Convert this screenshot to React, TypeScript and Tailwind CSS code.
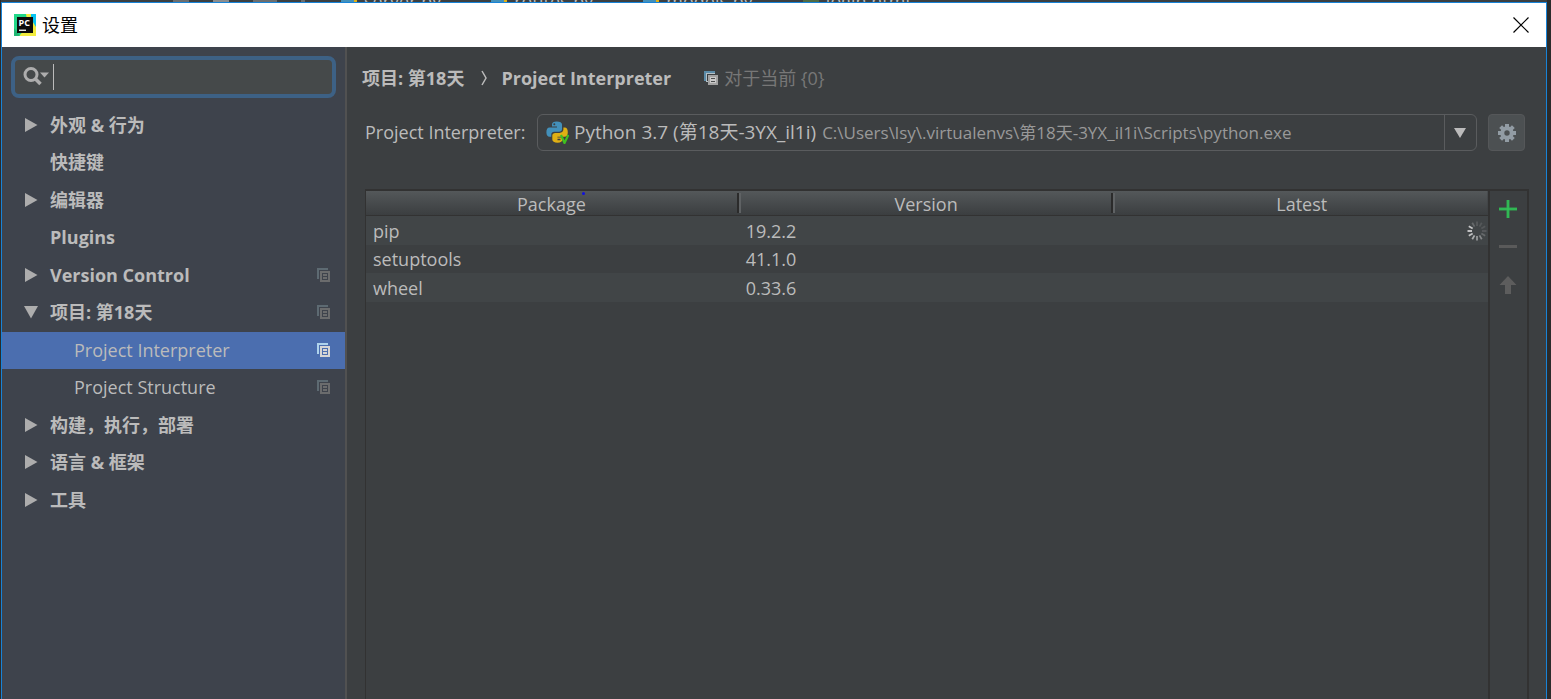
import React from "react";

type TreeItem = {
  label: string;
  state?: "closed" | "open";
  child?: boolean;
  shared?: boolean;
  selected?: boolean;
};

const tree: TreeItem[] = [
  { label: "外观 & 行为", state: "closed" },
  { label: "快捷键" },
  { label: "编辑器", state: "closed" },
  { label: "Plugins" },
  { label: "Version Control", state: "closed", shared: true },
  { label: "项目: 第18天", state: "open", shared: true },
  { label: "Project Interpreter", child: true, shared: true, selected: true },
  { label: "Project Structure", child: true, shared: true },
  { label: "构建，执行，部署", state: "closed" },
  { label: "语言 & 框架", state: "closed" },
  { label: "工具", state: "closed" },
];

const packages = [
  { name: "pip", version: "19.2.2", loading: true },
  { name: "setuptools", version: "41.1.0", loading: false },
  { name: "wheel", version: "0.33.6", loading: false },
];

const columns = ["Package", "Version", "Latest"];

const editorTabs = ["server.py", "routes.py", "models.py", "login.html"];

function AppLogo() {
  return (
    <svg width="22" height="22" viewBox="0 0 22 22" aria-hidden="true">
      <rect width="22" height="22" fill="#21d789" />
      <path d="M12 0H18L22 12V22H5L14 12Z" fill="#f2ec3e" />
      <path d="M17 0H22V13L17 5Z" fill="#07c3f2" />
      <path d="M0 14L6 22H0Z" fill="#21b573" />
      <rect x="3" y="3" width="16" height="16" fill="#0b0b0b" />
      <text x="4.500" y="11.800" fontSize="9" fontWeight="700" fill="#fff">PC</text>
      <rect x="5" y="15.600" width="7" height="1.300" fill="#fff" />
    </svg>
  );
}

function CopyIcon({ back, front }: { back: string; front: string }) {
  return (
    <svg width="13" height="14" viewBox="0 0 13 14" shapeRendering="crispEdges" className="shrink-0" aria-hidden="true">
      <path d="M0 0H11V2H2V11H0Z" fill={back} />
      <path d="M3 3H13V14H3ZM5 5V12H11V5Z" fillRule="evenodd" fill={front} />
      <path d="M6 6H10V8H6ZM6 9H10V11H6Z" fill={front} />
    </svg>
  );
}

function ScopeIcon() {
  return (
    <svg width="14" height="14" viewBox="0 0 14 14" shapeRendering="crispEdges" className="shrink-0" aria-hidden="true">
      <path d="M0 0H11V2H2V10H0Z" fill="#5b8ba8" />
      <path d="M2 2H11V4H4V11H2Z" fill="#b5c0c6" />
      <path d="M3 3H11V4H4V10H3Z" fill="#3c3f41" />
      <rect x="4" y="4" width="10" height="10" fill="#a2a2a2" />
      <path d="M6 6H12V12H6Z" fill="#c9c9c9" />
      <path d="M7 7H11V8H7ZM7 10H11V11H7Z" fill="#4b4d4e" />
    </svg>
  );
}

function SearchIcon() {
  return (
    <svg width="28" height="22" viewBox="0 0 28 22" className="shrink-0" aria-hidden="true">
      <circle cx="9" cy="8.500" r="6" fill="none" stroke="#adadad" strokeWidth="3" />
      <path d="M13 12.500L18.500 18" stroke="#adadad" strokeWidth="3.500" />
      <path d="M18 6.500H27L22.500 11.500Z" fill="#adadad" />
    </svg>
  );
}

function PythonIcon() {
  return (
    <svg width="23" height="23" viewBox="0 0 23 23" className="shrink-0" aria-hidden="true">
      <path
        d="M10.800 0.500C7.500 0.500 6 1.500 6 3.600V5.600H11V6.400H3.600C1.400 6.400 0.400 8.300 0.400 11.200C0.400 14 1.500 15.800 3.600 15.800H5.300V13.500C5.300 11.800 6.600 10.800 8.200 10.800H13C14.800 10.800 16 9.700 16 8V3.600C16 1.500 14 0.500 10.800 0.500Z"
        fill="#4390ba"
      />
      <circle cx="8.300" cy="3.200" r="1" fill="#3c3f41" />
      <path
        d="M17.400 6.400H18.600C20.800 6.400 21.800 8.300 21.800 11.200C21.800 14 20.800 15.800 18.600 15.800H11.400V16.600H16.400V18.600C16.400 20.700 14.800 21.700 11.600 21.700C8.200 21.700 6.300 20.700 6.300 18.600V14.600C6.300 13 7.500 11.900 9.200 11.900H13.600C15.600 11.900 17.400 10.600 17.400 8.600Z"
        fill="#e0b014"
      />
      <path d="M11.500 18.500H14.500" stroke="#3c3f41" strokeWidth="1.500" />
      <path d="M15 14L18.500 22L22.300 14" fill="none" stroke="#3fc01f" strokeWidth="2.200" />
    </svg>
  );
}

function GearIcon() {
  const teeth = [0, 45, 90, 135, 180, 225, 270, 315];
  return (
    <svg width="18" height="18" viewBox="0 0 18 18" aria-hidden="true">
      {teeth.map((a) => (
        <rect key={a} x="7" y="0" width="4" height="5" fill="#929ca4" transform={`rotate(${a} 9 9)`} />
      ))}
      <circle cx="9" cy="9" r="4.700" fill="none" stroke="#929ca4" strokeWidth="4" />
    </svg>
  );
}

function Spinner() {
  const shades = ["#5a5d5f", "#55585a", "#55585a", "#5a5d5f", "#66696b", "#858789", "#9b9d9e", "#adafb0", "#c0c1c2", "#d8d8d8", "#c4c5c6", "#66696b"];
  return (
    <svg width="20" height="20" viewBox="0 0 20 20" aria-hidden="true">
      {shades.map((c, i) => (
        <path key={i} d="M10 5V0.500" stroke={c} strokeWidth="1.700" transform={`rotate(${i * 30} 10 10)`} />
      ))}
    </svg>
  );
}

function Arrow({ state }: { state?: "closed" | "open" }) {
  return (
    <svg width="14" height="14" viewBox="0 0 14 14" className="shrink-0" aria-hidden="true">
      {state === "closed" && <path d="M1 0L13.500 7L1 14Z" fill="#adadad" />}
      {state === "open" && <path d="M0 1H14L7 13.500Z" fill="#adadad" />}
    </svg>
  );
}

export default function App() {
  return (
    <div className="flex h-screen flex-col overflow-hidden bg-[#2b2b2b] pr-1 pl-px font-['Open_Sans','Noto_Sans_CJK_SC',sans-serif] text-lg text-[#bbbbbb]">
      <div className="flex h-0.5 shrink-0 items-center overflow-hidden bg-[#3c3f41] leading-none" aria-hidden="true">
        <div className="flex w-[340px] shrink-0 gap-6 pl-[172px]">
          <span className="h-0.5 w-4 bg-[#6b6e70]" />
          <span className="h-0.5 w-4 bg-[#8a8d8f]" />
          <span className="h-0.5 w-6 bg-[#6b6e70]" />
          <span className="h-0.5 w-1 bg-[#6b6e70]" />
        </div>
        <div className="flex items-center gap-[50px]">
          {editorTabs.map((t) => (
            <span key={t} className="flex items-center gap-[7px]">
              <span className={`h-0.5 w-4 border-r-3 ${t.endsWith(".py") ? "border-[#e0b014] bg-[#4390ba]" : "border-[#4f6b45] bg-[#4f6b45]"}`} />
              {t}
            </span>
          ))}
        </div>
      </div>
      <div className="flex min-h-0 flex-1 flex-col border border-b-0 border-[#1883d7] bg-[#3c3f41]">
        <header className="flex h-11 shrink-0 items-center bg-white pr-4 pb-px pl-3 text-black">
          <AppLogo />
          <h1 className="ml-[6px] flex-1 leading-6">设置</h1>
          <button aria-label="关闭" className="p-px">
            <svg width="16" height="16" viewBox="0 0 16 16" aria-hidden="true">
              <path d="M0.500 0.500L15.500 15.500M15.500 0.500L0.500 15.500" stroke="#000" strokeWidth="1.200" />
            </svg>
          </button>
        </header>

        <div className="flex min-h-0 flex-1">
          <aside className="w-[345px] shrink-0 border-r-2 border-[#515151] bg-[#3e434c] pt-[9px]">
            <label className="mx-[9px] flex h-[42px] items-center rounded-lg border-4 border-[#3d6185] bg-[#45494a] pl-[7px]">
              <SearchIcon />
              <span className="ml-[3px] h-[26px] w-px bg-[#bbbbbb]" />
              <input aria-label="搜索设置" className="min-w-0 flex-1 bg-transparent px-1 caret-transparent outline-none" />
            </label>
            <ul className="mt-[9px]">
              {tree.map((item) => (
                <li key={item.label} className={`h-[37px] even:h-[38px] ${item.selected ? "bg-[#4b6eaf]" : ""}`}>
                  <a href="#" className="flex h-full items-center pr-[15px] pb-[2px] pl-[22px]">
                    <Arrow state={item.state} />
                    <span className={`flex-1 leading-6 ${item.child ? "pl-9" : "pl-3 font-bold"}`}>{item.label}</span>
                    {item.shared && (
                      <CopyIcon
                        back={item.selected ? "#afd3ec" : "#5d6a72"}
                        front={item.selected ? "#d5d5d5" : "#6b6c6d"}
                      />
                    )}
                  </a>
                </li>
              ))}
            </ul>
          </aside>

          <main className="flex min-w-0 flex-1 flex-col pr-[17px] pl-[18px]">
            <nav className="-ml-[3px] flex h-[67px] shrink-0 items-center pb-[5px] leading-6">
              <a href="#" className="font-bold">项目: 第18天</a>
              <svg width="8" height="16" viewBox="0 0 8 16" className="mr-[13px] ml-4" aria-hidden="true">
                <path d="M2 1L6 8L2 15" fill="none" stroke="#bbbbbb" strokeWidth="1.500" />
              </svg>
              <h2 className="font-bold">Project Interpreter</h2>
              <span className="ml-[33px] flex items-center gap-[6px] text-[#777777]">
                <ScopeIcon />
                对于当前 {"{0}"}
              </span>
            </nav>

            <div className="flex h-[37px] shrink-0 items-center pr-1 leading-6">
              <label htmlFor="interpreter" className="w-[172px] shrink-0 pb-[2px] whitespace-nowrap">Project Interpreter:</label>
              <div className="flex h-full min-w-0 flex-1 items-center rounded-md border border-[#5a5c5e] pl-2">
                <PythonIcon />
                <select id="interpreter" className="ml-[5px] shrink-0 appearance-none bg-transparent pb-[2px] text-[19px] [field-sizing:content]">
                  <option>Python 3.7 (第18天-3YX_il1i)</option>
                </select>
                <span className="ml-[6px] min-w-0 flex-1 truncate text-[17px] text-[#999999]">
                  C:\Users\lsy\.virtualenvs\第18天-3YX_il1i\Scripts\python.exe
                </span>
                <span className="flex h-full w-8 items-center justify-center border-l border-[#5a5c5e] pr-px">
                  <svg width="12" height="10" viewBox="0 0 12 10" aria-hidden="true">
                    <path d="M0 0H12L6 10Z" fill="#bbbbbb" />
                  </svg>
                </span>
              </div>
              <button aria-label="解释器选项" className="ml-[11px] flex size-[37px] shrink-0 items-center justify-center rounded-sm border border-[#555759] bg-[#4c5052]">
                <GearIcon />
              </button>
            </div>

            <div className="mt-[38px] flex min-h-0 flex-1 border-t-2 border-r-2 border-l border-[#323232]">
              <div className="min-w-0 flex-1">
                <table className="w-full table-fixed border-collapse leading-6">
                  <thead>
                    <tr className="bg-linear-to-b from-[#54585a] to-[#3a3d3f]">
                      {columns.map((h, i) => (
                        <th key={h} className="w-[33.4%] p-0 font-normal last:w-auto">
                          <div className="flex h-[25px] items-center border-b border-[#323232]">
                            <span className="flex-1 pt-px">
                              <span className="relative">
                                {h}
                                {i === 0 && <span className="absolute top-0 right-px size-[3px] rounded-full bg-[#1010e0]" />}
                              </span>
                            </span>
                            {i < 2 && <span className="h-5 w-1 border-r-2 border-l-2 border-r-[#5f6264] border-l-[#2b2b2b]" />}
                          </div>
                        </th>
                      ))}
                    </tr>
                  </thead>
                  <tbody>
                    {packages.map((p) => (
                      <tr key={p.name} className="h-[29px] odd:bg-[#414547] even:h-[28px]">
                        <td className="py-0 pl-[7px]">{p.name}</td>
                        <td className="py-0 pl-[5px]">{p.version}</td>
                        <td className="py-0 pr-px">
                          {p.loading && (
                            <div className="flex justify-end">
                              <Spinner />
                            </div>
                          )}
                        </td>
                      </tr>
                    ))}
                  </tbody>
                </table>
              </div>
              <div className="flex w-[39px] shrink-0 flex-col items-center gap-5 border-l-2 border-[#323232] pt-[9px] pr-[2px]">
                <button aria-label="添加">
                  <svg width="18" height="18" viewBox="0 0 18 18" className="block" aria-hidden="true">
                    <path d="M9 0V18M0 9H18" stroke="#2fa84f" strokeWidth="3" />
                    <path d="M9 0V18M0 9H18" stroke="#35c75a" strokeWidth="1" />
                  </svg>
                </button>
                <button aria-label="移除">
                  <svg width="18" height="18" viewBox="0 0 18 18" className="block" aria-hidden="true">
                    <rect y="7" width="18" height="3" fill="#5a5a5a" />
                  </svg>
                </button>
                <button aria-label="升级">
                  <svg width="18" height="18" viewBox="0 0 18 18" className="block" aria-hidden="true">
                    <path d="M9 0L17.500 9H12V18H6V9H0.500Z" fill="#5d5d5d" />
                  </svg>
                </button>
              </div>
            </div>
          </main>
        </div>
      </div>
    </div>
  );
}
